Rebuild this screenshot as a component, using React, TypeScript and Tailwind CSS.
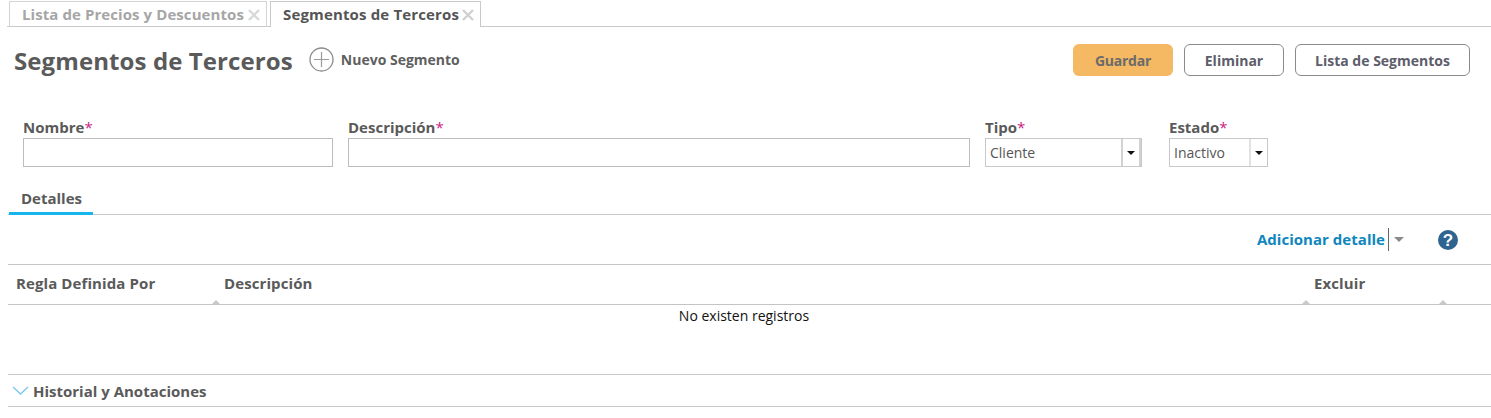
import React from "react";

function Star() {
  return <span className="font-normal text-[#c8237f]">*</span>;
}

function Field({ label, width, children }: { label: string; width: string; children: React.ReactNode }) {
  return (
    <div className={`flex flex-col ${width}`}>
      <label className="h-[21px] text-[15px] leading-[20px] font-bold text-[#5a5a5a]">
        {label}
        <Star />
      </label>
      {children}
    </div>
  );
}

function TextBox() {
  return <div className="h-[29px] w-full border border-[#bdbdbd] bg-white" />;
}

function Select({ value, arrowClass }: { value: string; arrowClass: string }) {
  return (
    <div className="flex h-[29px] w-full border border-[#c8c8c8] bg-white">
      <div className="flex-1 pl-[4px] text-[14px] leading-[27px] text-[#555555]">{value}</div>
      <div className={`flex items-center justify-center border-l-2 ${arrowClass}`}>
        <svg width="8" height="4" viewBox="0 0 8 4"><path d="M0 0h8L4 4z" fill="#111" /></svg>
      </div>
    </div>
  );
}

function HeaderCell({ label, className }: { label: string; className: string }) {
  return (
    <div className={`relative h-full pt-[8px] text-[15px] leading-[20px] font-bold tracking-[0.1px] text-[#5a5a5a] ${className}`}>
      {label}
      <svg className="absolute right-0 bottom-0" width="8" height="4" viewBox="0 0 8 4"><path d="M0 4 4 0l4 4z" fill="#c9c9c9" /></svg>
    </div>
  );
}

export default function App() {
  return (
    <div className="h-[418px] w-[1491px] overflow-hidden bg-white font-['Open_Sans','Liberation_Sans',sans-serif]">
      {/* Tabs */}
      <div className="ml-[7px] flex h-[27px] border-b border-[#c9c9c9] pt-[1px] pl-[2px]">
        <div className="flex h-[26px] w-[258px] items-center border border-b-0 border-[#d4d4d4] pl-[12px] text-[15px] font-bold tracking-[0.08px] text-[#a6a6a6]">
          <span>Lista de Precios y Descuentos</span>
          <svg className="ml-[4px]" width="12" height="12" viewBox="0 0 12 12"><path d="M1 1l10 10M11 1 1 11" stroke="#d9d9d9" strokeWidth="2.4" /></svg>
        </div>
        <div className="ml-[3px] flex h-[26px] w-[211px] items-center border border-b-0 border-[#c9c9c9] bg-white pl-[12px] text-[15px] font-bold tracking-[0.15px] text-[#555555]">
          <span>Segmentos de Terceros</span>
          <svg className="ml-[3px]" width="12" height="12" viewBox="0 0 12 12"><path d="M1 1l10 10M11 1 1 11" stroke="#d0d0d0" strokeWidth="2.4" /></svg>
        </div>
      </div>

      {/* Title bar */}
      <div className="flex h-[67px] items-start pr-[21px] pl-[14px]">
        <h1 className="mt-[18px] text-[24px] leading-[32px] font-bold tracking-[0.1px] text-[#5a5a5a]">Segmentos de Terceros</h1>
        <svg className="mt-[20px] ml-[16px]" width="25" height="25" viewBox="0 0 25 25" fill="none">
          <circle cx="12.5" cy="12.5" r="11.5" stroke="#8c8c8c" strokeWidth="1.3" />
          <path d="M12.5 5v15M5 12.5h15" stroke="#9a9a9a" strokeWidth="1.2" />
        </svg>
        <span className="mt-[24px] ml-[7px] text-[14px] leading-[18px] font-bold text-[#5f5f5f]">Nuevo Segmento</span>
        <div className="mt-[17px] ml-auto flex gap-[11px]">
          <button className="h-[32px] w-[100px] rounded-[6px] bg-[#f4b962] text-[14px] font-bold tracking-[-0.25px] text-[#6b6b6b]">Guardar</button>
          <button className="h-[32px] w-[100px] rounded-[6px] border border-[#8a8a8a] bg-white text-[14px] font-bold text-[#5d5d6b]">Eliminar</button>
          <button className="h-[32px] w-[175px] rounded-[6px] border border-[#8a8a8a] bg-white text-[14px] font-bold text-[#5d5d6b]">Lista de Segmentos</button>
        </div>
      </div>

      {/* Form */}
      <div className="mt-[23px] flex pl-[23px]">
        <Field label="Nombre" width="w-[310px]"><TextBox /></Field>
        <div className="ml-[15px]"><Field label="Descripción" width="w-[622px]"><TextBox /></Field></div>
        <div className="ml-[15px]"><Field label="Tipo" width="w-[157px]"><Select value="Cliente" arrowClass="w-[20px] border-[#d2d2d2] border-r-2" /></Field></div>
        <div className="ml-[27px]"><Field label="Estado" width="w-[99px]"><Select value="Inactivo" arrowClass="w-[18px] border-[#e2e2e2]" /></Field></div>
      </div>

      {/* Details tab */}
      <div className="mt-[19px] ml-[8px] h-[29px] border-b border-[#c9c9c9]">
        <div className="ml-[1px] h-[29px] w-[84px] border-b-[3px] border-[#17b5ee] pt-[2px] pl-[12px] text-[15px] leading-[20px] font-bold text-[#5a5a5a]">Detalles</div>
      </div>

      {/* Toolbar */}
      <div className="ml-[8px] flex h-[50px] items-center justify-end border-b border-[#c4c4c4] pr-[33px]">
        <span className="text-[15px] font-bold tracking-[0.03px] text-[#0f86bd]">Adicionar detalle</span>
        <span className="ml-[3px] h-[23px] w-px bg-[#666666]" />
        <svg className="ml-[5px]" width="10" height="5" viewBox="0 0 10 5"><path d="M0 0h10L5 5z" fill="#8a8a8a" /></svg>
        <svg className="ml-[34px]" width="20" height="20" viewBox="0 0 20 20">
          <circle cx="10" cy="10" r="10" fill="#2f6491" />
          <text x="10" y="16" textAnchor="middle" fontSize="17" fontWeight="700" fill="#fff" fontFamily="Liberation Sans">?</text>
        </svg>
      </div>

      {/* Table */}
      <div className="ml-[8px] flex h-[40px] border-b border-[#c4c4c4]">
        <HeaderCell label="Regla Definida Por" className="w-[212px] pl-[8px]" />
        <HeaderCell label="Descripción" className="w-[1090px] pl-[4px]" />
        <HeaderCell label="Excluir" className="w-[137px] pl-[4px]" />
      </div>
      <div className="ml-[8px] h-[69px] pt-[2px] text-center text-[14px] leading-[18px] text-[#111111]">
        <div className="w-[1472px]">No existen registros</div>
      </div>

      {/* History */}
      <div className="ml-[8px] flex h-[33px] items-center gap-[4px] border-y border-[#c9c9c9] pl-[4px] text-[15px] font-bold text-[#5a5a5a]">
        <svg width="17" height="9" viewBox="0 0 17 9" fill="none"><path d="M1 1l7.5 7L16 1" stroke="#7cc8ee" strokeWidth="1.4" /></svg>
        <span className="pt-[2px]">Historial y Anotaciones</span>
      </div>
    </div>
  );
}
